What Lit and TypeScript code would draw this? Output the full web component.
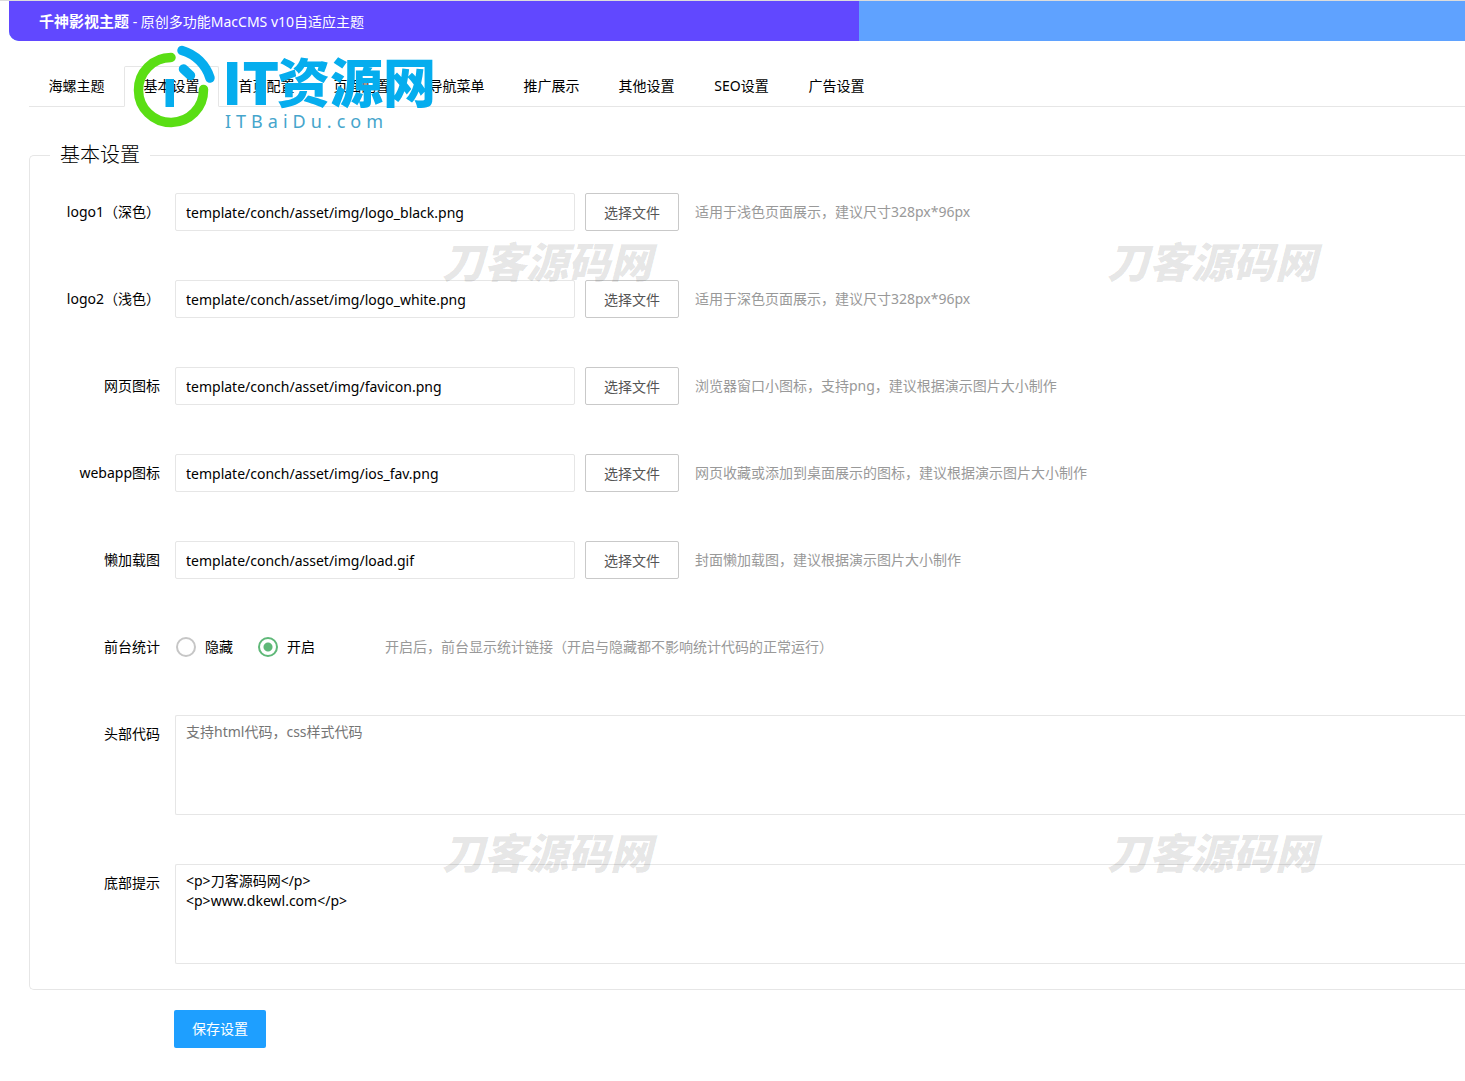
import { LitElement, html, css } from "lit";
import { customElement, state } from "lit/decorators.js";

interface FileField {
  id: string;
  label: string;
  value: string;
  hint: string;
}

const TABS = ["海螺主题", "基本设置", "首页配置", "页面配置", "导航菜单", "推广展示", "其他设置", "SEO设置", "广告设置"];

const FILE_FIELDS: FileField[] = [
  { id: "logo1", label: "logo1（深色）", value: "template/conch/asset/img/logo_black.png", hint: "适用于浅色页面展示，建议尺寸328px*96px" },
  { id: "logo2", label: "logo2（浅色）", value: "template/conch/asset/img/logo_white.png", hint: "适用于深色页面展示，建议尺寸328px*96px" },
  { id: "favicon", label: "网页图标", value: "template/conch/asset/img/favicon.png", hint: "浏览器窗口小图标，支持png，建议根据演示图片大小制作" },
  { id: "webapp", label: "webapp图标", value: "template/conch/asset/img/ios_fav.png", hint: "网页收藏或添加到桌面展示的图标，建议根据演示图片大小制作" },
  { id: "lazy", label: "懒加载图", value: "template/conch/asset/img/load.gif", hint: "封面懒加载图，建议根据演示图片大小制作" },
];

const FOOTER_HTML = "<p>刀客源码网</p>\n<p>www.dkewl.com</p>";

@customElement("site-logo")
export class SiteLogo extends LitElement {
  static styles = css`
    :host {
      display: block;
    }
    .art {
      display: block;
      width: 312px;
      height: 92px;
      overflow: visible;
    }
    .stroke {
      fill: none;
      stroke-width: 9.5;
      stroke-linecap: round;
    }
    .green {
      stroke: #5ade14;
    }
    .blue {
      stroke: #05adee;
    }
    .bar,
    .name {
      fill: #05adee;
    }
    .name {
      font-family: "Noto Sans CJK SC", sans-serif;
      font-weight: 900;
    }
    .latin {
      font-size: 58px;
    }
    .han {
      font-size: 53px;
    }
    .domain {
      font-family: "Noto Sans", "Open Sans", sans-serif;
      font-size: 18px;
      letter-spacing: 5px;
      fill: #45a5cc;
    }
  `;

  render() {
    return html`
      <svg class="art" viewBox="130 42 312 92" role="img" aria-label="IT资源网">
        <path class="stroke green" d="M171 57.500 A32.500 32.500 0 1 0 203.500 89.500" />
        <path class="stroke blue" d="M182 50.500 A41 41 0 0 1 210 78" />
        <path class="stroke blue" d="M183.500 69 L190.500 75.500" />
        <rect class="bar" x="165.500" y="79" width="8.500" height="28" />
        <text class="name latin" x="222" y="105">IT</text>
        <text class="name han" x="277" y="103">资源网</text>
        <text class="domain" x="225" y="128">ITBaiDu.com</text>
      </svg>
    `;
  }
}

@customElement("app-root")
export class AppRoot extends LitElement {
  @state() private activeTab = 1;
  @state() private stats = "on";

  static styles = css`
    :host {
      display: block;
      position: relative;
      overflow: hidden;
      min-height: 100vh;
      background: #fff;
      color: #000;
      font-family: "Noto Sans", "Noto Sans CJK SC", sans-serif;
      font-size: 14px;
      line-height: 20px;
    }
    * {
      box-sizing: border-box;
    }
    button,
    input,
    textarea {
      font: inherit;
      margin: 0;
    }
    .page {
      border-top: 1px solid #dcdcdc;
      padding-left: 9px;
    }
    .banner {
      display: grid;
      grid-template-columns: 58.4% 1fr;
      height: 40px;
      overflow: hidden;
      border-bottom-left-radius: 10px;
      background: #5fa2ff;
    }
    .title {
      padding-left: 30px;
      line-height: 41px;
      color: #fff;
      background: #6148ff;
      white-space: nowrap;
    }
    .strong {
      font-size: 15px;
    }
    .body {
      padding-left: 20px;
    }
    .tabs {
      display: flex;
      height: 41px;
      margin-top: 25px;
      border-bottom: 1px solid #e6e6e6;
    }
    .tab {
      flex: none;
      width: 95px;
      height: 41px;
      padding: 0 0 2px;
      border: 1px solid transparent;
      border-radius: 2px 2px 0 0;
      background: none;
      color: #000;
      cursor: pointer;
    }
    .tab.active {
      border-color: #e6e6e6;
      border-bottom-color: #fff;
    }
    .group {
      min-width: 0;
      margin: 34px 0 20px;
      padding: 24px 0 25px;
      border: 1px solid #e6e6e6;
      border-right: 0;
      border-radius: 5px 0 0 5px;
    }
    .legend {
      margin-left: 20px;
      padding: 0 10px;
      font-size: 20px;
      font-weight: 300;
      line-height: 28px;
    }
    .rows {
      display: grid;
      gap: 49px;
    }
    .row {
      display: flex;
      gap: 10px;
      min-height: 38px;
    }
    .label {
      flex: none;
      width: 130px;
      margin-right: 5px;
      line-height: 38px;
      text-align: right;
      white-space: nowrap;
    }
    .path {
      flex: none;
      width: 400px;
      height: 38px;
      padding: 0 10px;
      border: 1px solid #e6e6e6;
      border-radius: 2px;
      background: none;
      color: #000;
    }
    .pick {
      flex: none;
      width: 94px;
      height: 38px;
      padding: 2px 0 0;
      border: 1px solid #c9c9c9;
      border-radius: 2px;
      background: none;
      color: #555;
      cursor: pointer;
    }
    .hint {
      color: #999;
      line-height: 38px;
      white-space: nowrap;
    }
    .pick + .hint {
      margin-left: 6px;
    }
    .choices {
      display: flex;
      flex: none;
      gap: 25px;
      width: 200px;
      padding-left: 1px;
    }
    .choice {
      display: flex;
      align-items: center;
      gap: 9px;
      cursor: pointer;
    }
    .radio {
      appearance: none;
      width: 20px;
      height: 20px;
      border: 2px solid #c6c6c6;
      border-radius: 50%;
      background: #fff;
      cursor: pointer;
    }
    .radio:checked {
      border-color: #5fb878;
      background: radial-gradient(circle, #5fb878 4px, #fff 5px);
    }
    .code {
      flex: 1;
      min-width: 0;
      height: 100px;
      padding: 6px 10px;
      border: 1px solid #e6e6e6;
      border-right: 0;
      border-radius: 2px 0 0 2px;
      background: none;
      color: #000;
      resize: none;
    }
    .code::placeholder {
      color: #757575;
    }
    .save {
      display: block;
      width: 92px;
      height: 38px;
      margin-left: 145px;
      padding: 0;
      border: 0;
      border-radius: 2px;
      background: #1e9fff;
      color: #fff;
      cursor: pointer;
    }
    .brand {
      position: absolute;
      left: 130px;
      top: 42px;
      pointer-events: none;
    }
    .stamps {
      position: absolute;
      left: 442px;
      top: 232px;
      display: grid;
      grid-template-columns: 665px 665px;
      grid-template-rows: 591px 56px;
      pointer-events: none;
    }
    .stamp {
      color: rgba(0, 0, 0, 0.11);
      font-family: "Noto Sans CJK SC", sans-serif;
      font-size: 42px;
      font-style: italic;
      font-weight: 900;
      line-height: 56px;
    }
  `;

  private renderFile(f: FileField) {
    return html`
      <div class="row">
        <label class="label" for=${f.id}>${f.label}</label>
        <input class="path" id=${f.id} type="text" .value=${f.value} />
        <button class="pick" type="button">选择文件</button>
        <span class="hint">${f.hint}</span>
      </div>
    `;
  }

  private renderRadio(value: string, text: string) {
    return html`
      <label class="choice">
        <input
          class="radio"
          type="radio"
          name="stats"
          value=${value}
          .checked=${this.stats === value}
          @change=${() => (this.stats = value)}
        />${text}
      </label>
    `;
  }

  render() {
    return html`
      <div class="page">
        <header class="banner">
          <div class="title"><b class="strong">千神影视主题</b> - 原创多功能MacCMS v10自适应主题</div>
        </header>
        <form class="body" @submit=${(e: Event) => e.preventDefault()}>
          <nav class="tabs">
            ${TABS.map(
              (t, i) => html`<button
                type="button"
                class=${i === this.activeTab ? "tab active" : "tab"}
                @click=${() => (this.activeTab = i)}
              >${t}</button>`
            )}
          </nav>
          <fieldset class="group">
            <legend class="legend">基本设置</legend>
            <div class="rows">
              ${FILE_FIELDS.map((f) => this.renderFile(f))}
              <div class="row" role="radiogroup" aria-labelledby="stats-label">
                <span class="label" id="stats-label">前台统计</span>
                <div class="choices">${this.renderRadio("off", "隐藏")}${this.renderRadio("on", "开启")}</div>
                <span class="hint">开启后，前台显示统计链接（开启与隐藏都不影响统计代码的正常运行）</span>
              </div>
              <div class="row">
                <label class="label" for="head">头部代码</label>
                <textarea class="code" id="head" placeholder="支持html代码，css样式代码"></textarea>
              </div>
              <div class="row">
                <label class="label" for="foot">底部提示</label>
                <textarea class="code" id="foot" .value=${FOOTER_HTML}></textarea>
              </div>
            </div>
          </fieldset>
          <button class="save" type="submit">保存设置</button>
        </form>
      </div>
      <site-logo class="brand"></site-logo>
      <div class="stamps">
        ${[0, 1, 2, 3].map(() => html`<span class="stamp">刀客源码网</span>`)}
      </div>
    `;
  }
}
